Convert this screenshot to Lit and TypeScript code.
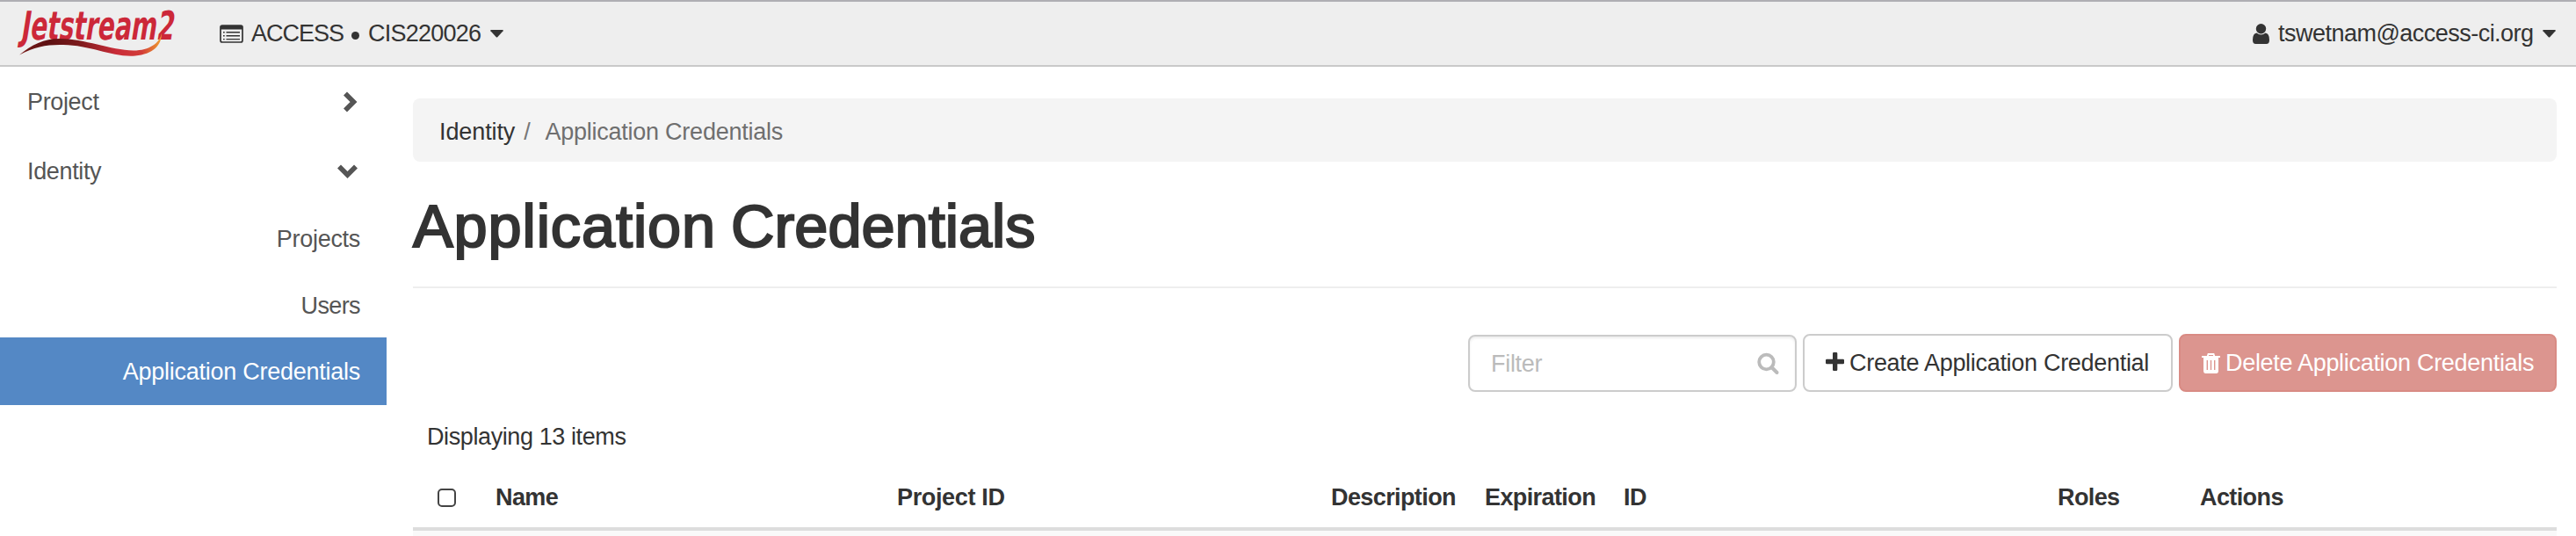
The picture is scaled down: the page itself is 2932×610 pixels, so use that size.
import { LitElement, html, css } from "lit";
import { customElement } from "lit/decorators.js";

const caret = html`<svg class="caret" width="15" height="9" viewBox="0 0 15 9"><path d="M1 0H14Q15.4 .2 14.6 1.2L8.2 8.2Q7.5 8.9 6.8 8.2L.4 1.2Q-.4 .2 1 0Z" fill="#333" /></svg>`;

const logo = html`<svg class="logo" width="184" height="58" viewBox="0 0 184 58" role="img">
  <defs>
    <linearGradient id="swoosh" x1="0" x2="1" y1="0" y2="0">
      <stop offset="0" stop-color="#7a1a18" />
      <stop offset=".2" stop-color="#5c1012" />
      <stop offset=".42" stop-color="#7c1b1c" />
      <stop offset=".68" stop-color="#c92c38" />
      <stop offset=".86" stop-color="#d23c38" />
      <stop offset="1" stop-color="#f0a030" />
    </linearGradient>
  </defs>
  <g fill="#cc2839" class="logo-text">
    <text transform="translate(3 45) skewX(-9)" x="0" y="0" font-size="45" textLength="174" lengthAdjust="spacingAndGlyphs">Jetstream2</text>
  </g>
  <path d="M2 62.500C16 51 30 44 48 44C76 44 106 57 132 57.500C150 57.500 162 49 164 37.500C164 52 154 61.500 134 63.500C108 65.500 84 51.500 52 51C34 50.500 20 53 2 62.500Z" fill="url(#swoosh)" />
</svg>`;

const columns = [
  ["Name", "name"],
  ["Project ID", "project"],
  ["Description", "desc"],
  ["Expiration", "exp"],
  ["ID", "id"],
  ["Roles", "roles"],
  ["Actions", "actions"],
];

@customElement("app-root")
export class AppRoot extends LitElement {
  static styles = css`
    :host {
      display: block;
      height: 610px;
      overflow: hidden;
      background: #fff;
      color: #333;
      font: 27px/36px "Liberation Sans", Arial, sans-serif;
      letter-spacing: -0.3px;
    }
    * { box-sizing: border-box; }
    svg { display: block; flex: none; overflow: visible; }
    .top {
      height: 76px;
      border-top: 2px solid #afaeb3;
      border-bottom: 2px solid #c9c9c9;
      background: #eee;
      display: flex;
      align-items: center;
      padding: 0 23px 0 20px;
      white-space: nowrap;
    }
    .logo { align-self: flex-start; margin-top: -2px; }
    .logo-text { font-family: "DejaVu Sans Condensed", "DejaVu Sans", sans-serif; font-weight: 700; letter-spacing: 0; }
    .context { display: flex; align-items: center; margin-left: 46px; }
    .context .label { margin-left: 9px; width: 104px; letter-spacing: -1px; }
    .dot { width: 9px; height: 9px; border-radius: 50%; background: #333; margin: 4px 10px 0 10px; }
    .cis { width: 139px; letter-spacing: -0.75px; }
    .user { display: flex; align-items: center; margin-left: auto; }
    .user .mail { margin-left: 10px; width: 301px; letter-spacing: -0.52px; }
    .body { display: flex; }
    .side { width: 440px; color: #555; flex: none; }
    .group { height: 79px; padding: 0 33px 0 31px; display: flex; justify-content: space-between; align-items: center; letter-spacing: -0.35px; }
    .item { height: 76px; padding-right: 30px; display: flex; align-items: center; justify-content: flex-end; }
    .item.short { height: 74px; padding-top: 2px; letter-spacing: -0.6px; }
    .item.active { height: 77px; background: #5488c5; color: #fff; letter-spacing: -0.26px; }
    main { flex: 1; margin: 36px 22px 0 30px; min-width: 0; }
    .crumbs { height: 72px; border-radius: 8px; background: #f4f4f4; display: flex; align-items: center; padding: 3px 0 0 30px; color: #333; letter-spacing: -0.25px; }
    .crumbs .first { letter-spacing: -0.1px; }
    .crumbs .sep { color: #777; margin: 0 17px 0 10px; }
    .crumbs .here { color: #6f6f6f; }
    h1 {
      margin: 0;
      height: 144px;
      border-bottom: 2px solid #eee;
      font-size: 68.5px;
      font-weight: 400;
      line-height: 80px;
      padding-top: 34px;
      letter-spacing: 0;
      word-spacing: -2px;
      -webkit-text-stroke: 2.2px #333;
    }
    h1 .lead { letter-spacing: 0.9px; }
    .tools { display: flex; justify-content: flex-end; margin-top: 52px; height: 66px; }
    .filter {
      width: 374px; height: 65px; margin: 1px 7px 0 0;
      border: 2px solid #ccc; border-radius: 8px;
      box-shadow: inset 0 2px 3px rgba(0, 0, 0, 0.075);
      display: flex; align-items: center; justify-content: space-between;
      padding: 0 18px 0 24px; color: #bbb;
    }
    .btn { height: 66px; border: 2px solid #ccc; border-radius: 8px; display: flex; align-items: center; padding-left: 24px; white-space: nowrap; }
    .create { width: 421px; margin-right: 7px; }
    .create svg { margin-right: 6px; margin-top: -3px; }
    .delete { width: 430px; background: #dc958f; border-color: #d98b84; color: #fff; }
    .delete svg { margin-right: 6px; }
    .count { margin-top: 33px; padding-left: 16px; height: 36px; letter-spacing: -0.4px; }
    .head {
      display: grid;
      grid-template-columns: 94px 457px 494px 175px 158px 494px 162px 1fr;
      height: 89px;
      border-bottom: 4px solid #ddd;
      padding-top: 33px;
      font-weight: 700;
      letter-spacing: -0.6px;
      white-space: nowrap;
    }
    .head .project { letter-spacing: -0.35px; }
    .check { width: 21px; height: 21px; border: 2px solid #444; border-radius: 5px; margin: 8px 0 0 28px; }
    .row { height: 6px; background: #f9f9f9; }
  `;

  render() {
    return html`
      <header class="top">
        ${logo}
        <div class="context">
          <svg width="27" height="21" viewBox="0 0 27 21">
            <rect x="1" y="1" width="25" height="19" rx="2" fill="none" stroke="#333" stroke-width="1.700" />
            <path d="M1 1H26V5.500H1Z" fill="#333" />
            <path d="M4 8.800H5.700M4 12.700H5.700M4 16.600H5.700M7.500 8.800H23M7.500 12.700H23M7.500 16.600H23" stroke="#333" stroke-width="1.400" />
          </svg>
          <span class="label">ACCESS</span><span class="dot"></span><span class="cis">CIS220026</span>${caret}
        </div>
        <div class="user">
          <svg width="19" height="23" viewBox="0 0 19 23"><circle cx="9.500" cy="5.700" r="5.700" fill="#333" /><path d="M4.500 10.500Q9.500 14.500 14.500 10.500Q19 11 19 18.500Q19 23 15.500 23H3.500Q0 23 0 18.500Q0 11 4.500 10.500Z" fill="#333" /></svg>
          <span class="mail">tswetnam@access-ci.org</span>${caret}
        </div>
      </header>
      <div class="body">
        <nav class="side">
          <div class="group">Project
            <svg width="17" height="24" viewBox="0 0 17 24"><path d="M3 2.500L12.500 12L3 21.500" fill="none" stroke="#555" stroke-width="5.600" /></svg>
          </div>
          <div class="group">Identity
            <svg width="23" height="16" viewBox="0 0 23 16"><path d="M2 2.500L11.500 12L21 2.500" fill="none" stroke="#555" stroke-width="5.600" /></svg>
          </div>
          <div class="item">Projects</div>
          <div class="item short">Users</div>
          <div class="item active">Application Credentials</div>
        </nav>
        <main>
          <div class="crumbs"><span class="first">Identity</span><span class="sep">/</span><span class="here">Application Credentials</span></div>
          <h1><span class="lead">Application</span> Credentials</h1>
          <div class="tools">
            <div class="filter"><span>Filter</span>
              <svg width="25" height="24" viewBox="0 0 25 24"><circle cx="10.500" cy="10" r="8.300" fill="none" stroke="#bbb" stroke-width="3.800" /><path d="M16.500 16L22.500 22" stroke="#bbb" stroke-width="4" stroke-linecap="round" /></svg>
            </div>
            <div class="btn create">
              <svg width="21" height="21" viewBox="0 0 21 21"><path d="M8 1.300Q8 0 9.300 0H12Q13.300 0 13.300 1.300V7.700H19.700Q21 7.700 21 9V12Q21 13.300 19.700 13.300H13.300V19.700Q13.300 21 12 21H9.300Q8 21 8 19.700V13.300H1.300Q0 13.300 0 12V9Q0 7.700 1.300 7.700H8Z" fill="#333" /></svg>
              Create Application Credential
            </div>
            <div class="btn delete">
              <svg width="21" height="23" viewBox="0 0 21 23"><path d="M0 4H21M6.500 4L7.500 1H13.500L14.500 4" stroke="#fff" stroke-width="1.900" fill="none" /><path fill-rule="evenodd" d="M2 4H19V20Q19 23 16.500 23H4.500Q2 23 2 20ZM5.600 8V19H7V8ZM9.800 8V19H11.200V8ZM14 8V19H15.400V8Z" fill="#fff" /></svg>
              Delete Application Credentials
            </div>
          </div>
          <div class="count">Displaying 13 items</div>
          <div class="head">
            <span class="check"></span>
            ${columns.map(([t, c]) => html`<span class=${c}>${t}</span>`)}
          </div>
          <div class="row"></div>
        </main>
      </div>
    `;
  }
}
